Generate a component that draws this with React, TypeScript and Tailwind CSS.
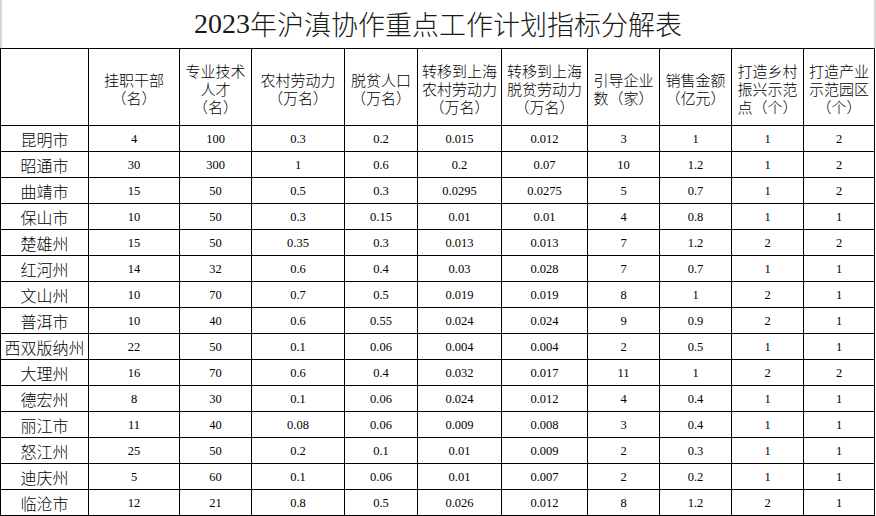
const cjk = { fontFamily: '"Noto Sans CJK SC", "Noto Sans", sans-serif' };
const num = { fontFamily: '"Liberation Serif", "Times New Roman", serif' };

const widths = ["w-[88px]", "w-[91px]", "w-[72px]", "w-[93px]", "w-[73px]", "w-[84px]", "w-[86px]", "w-[72px]", "w-[72px]", "w-[72px]", "w-[71px]"];

const headers: string[][] = [
    [],
    ["挂职干部", "（名）"],
    ["专业技术", "人才", "（名）"],
    ["农村劳动力", "（万名）"],
    ["脱贫人口", "（万名）"],
    ["转移到上海", "农村劳动力", "（万名）"],
    ["转移到上海", "脱贫劳动力", "（万名）"],
    ["引导企业", "数（家）"],
    ["销售金额", "（亿元）"],
    ["打造乡村", "振兴示范", "点（个）"],
    ["打造产业", "示范园区", "（个）"],
];

const rows: string[][] = [
    ["昆明市", "4", "100", "0.3", "0.2", "0.015", "0.012", "3", "1", "1", "2"],
    ["昭通市", "30", "300", "1", "0.6", "0.2", "0.07", "10", "1.2", "1", "2"],
    ["曲靖市", "15", "50", "0.5", "0.3", "0.0295", "0.0275", "5", "0.7", "1", "2"],
    ["保山市", "10", "50", "0.3", "0.15", "0.01", "0.01", "4", "0.8", "1", "1"],
    ["楚雄州", "15", "50", "0.35", "0.3", "0.013", "0.013", "7", "1.2", "2", "2"],
    ["红河州", "14", "32", "0.6", "0.4", "0.03", "0.028", "7", "0.7", "1", "1"],
    ["文山州", "10", "70", "0.7", "0.5", "0.019", "0.019", "8", "1", "2", "1"],
    ["普洱市", "10", "40", "0.6", "0.55", "0.024", "0.024", "9", "0.9", "2", "1"],
    ["西双版纳州", "22", "50", "0.1", "0.06", "0.004", "0.004", "2", "0.5", "1", "1"],
    ["大理州", "16", "70", "0.6", "0.4", "0.032", "0.017", "11", "1", "2", "2"],
    ["德宏州", "8", "30", "0.1", "0.06", "0.024", "0.012", "4", "0.4", "1", "1"],
    ["丽江市", "11", "40", "0.08", "0.06", "0.009", "0.008", "3", "0.4", "1", "1"],
    ["怒江州", "25", "50", "0.2", "0.1", "0.01", "0.009", "2", "0.3", "1", "1"],
    ["迪庆州", "5", "60", "0.1", "0.06", "0.01", "0.007", "2", "0.2", "1", "1"],
    ["临沧市", "12", "21", "0.8", "0.5", "0.026", "0.012", "8", "1.2", "2", "1"],
];

export default function App() {
    return (
        <div className="w-[876px] h-[516px] bg-white text-black overflow-hidden">
            <div className="h-[48px] flex items-center justify-center border-l-2 border-r-2 border-[#d8d8d8] text-[27px] font-light text-[#1a1a1a]" style={cjk}>
                <span style={num} className="text-[28px] font-normal">2023</span>
                <span>年沪滇协作重点工作计划指标分解表</span>
            </div>
            <table className="table-fixed border-collapse w-[874px]">
                <colgroup>
                    {widths.map((w, i) => (
                        <col key={i} className={w} />
                    ))}
                </colgroup>
                <thead>
                    <tr className="h-[77px]">
                        {headers.map((lines, i) => (
                            <th key={i} className="border border-black font-light text-[15px] leading-[18px] text-center align-middle pt-[3px] p-0" style={cjk}>
                                {lines.map((l, j) => (
                                    <div key={j}>{l}</div>
                                ))}
                            </th>
                        ))}
                    </tr>
                </thead>
                <tbody>
                    {rows.map((r) => (
                        <tr key={r[0]} className="h-[26px]">
                            {r.map((c, i) =>
                                i === 0 ? (
                                    <td key={i} className="border border-black text-center font-light text-[16px] leading-[20px] p-0" style={cjk}>
                                        {c}
                                    </td>
                                ) : (
                                    <td key={i} className="border border-black text-center text-[12.5px] leading-[20px] p-0" style={num}>
                                        {c}
                                    </td>
                                )
                            )}
                        </tr>
                    ))}
                </tbody>
            </table>
        </div>
    );
}
